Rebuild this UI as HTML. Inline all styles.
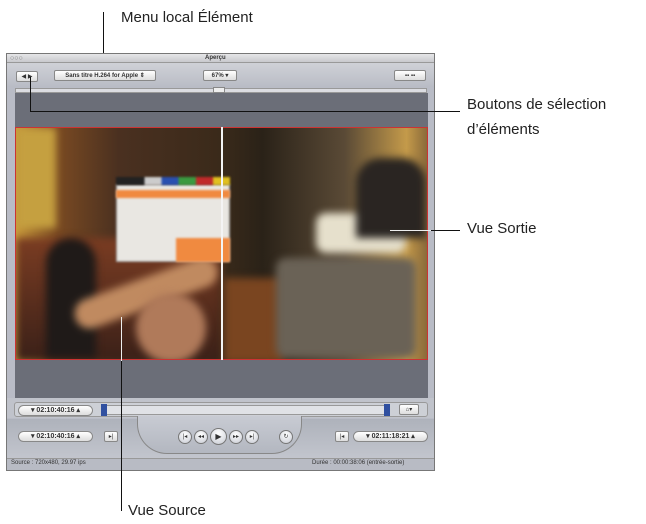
<!DOCTYPE html>
<html><head><meta charset="utf-8"><style>
*{margin:0;padding:0;box-sizing:border-box}
body{width:646px;height:524px;background:#fff;position:relative;overflow:hidden;font-family:"Liberation Sans",sans-serif}
.a{position:absolute}
.lbl{position:absolute;font-size:15px;color:#222;white-space:nowrap}
.ln{position:absolute;background:#111}
.win{left:6px;top:53px;width:429px;height:418px;background:#b9bcc6;border:1px solid #777}
.sm{font-size:6px;color:#333;font-weight:bold}
.pill{position:absolute;height:11px;border:1px solid #888;border-radius:6px;background:linear-gradient(#fff,#ddd);font-size:7px;font-weight:bold;color:#333;text-align:center;line-height:10px}
.btn{position:absolute;height:11px;border:1px solid #888;border-radius:2px;background:linear-gradient(#fff,#ddd);font-size:6px;text-align:center;line-height:10px;color:#333}
.cb{position:absolute;width:14px;height:14px;border:1px solid #777;border-radius:50%;background:radial-gradient(circle at 50% 30%,#fff,#c8cbd3);font-size:6px;text-align:center;line-height:13px;color:#333}
.bl{filter:blur(4px)}
</style></head><body>
<div class="lbl" style="left:121px;top:9px">Menu local Élément</div>
<div class="ln" style="left:103px;top:12px;width:1px;height:49px"></div>
<div class="lbl" style="left:467px;top:96px">Boutons de sélection</div>
<div class="lbl" style="left:467px;top:121px">d’éléments</div>
<div class="lbl" style="left:467px;top:220px">Vue Sortie</div>
<div class="lbl" style="left:128px;top:502px">Vue Source</div>

<div class="a win">
 <div class="a" style="left:0;top:0;width:427px;height:9px;background:linear-gradient(#e6e6e8,#c8c9cd);border-bottom:1px solid #999"></div>
 <div class="a" style="left:3px;top:1px;font-size:7px;color:#777">○○○</div>
 <div class="a sm" style="left:198px;top:1px;font-size:6px">Aperçu</div>
 <div class="a" style="left:0;top:9px;width:427px;height:24px;background:linear-gradient(#cfd1d7,#b9bcc5)"></div>
 <div class="btn" style="left:9px;top:17px;width:22px">◀ ▶</div>
 <div class="btn" style="left:47px;top:16px;width:102px;font-weight:bold">Sans titre H.264 for Apple ⇕</div>
 <div class="btn" style="left:196px;top:16px;width:34px;font-weight:bold">67% ▾</div>
 <div class="btn" style="left:387px;top:16px;width:32px">▪▪ ▪▪</div>
 <div class="a" style="left:8px;top:34px;width:412px;height:5px;background:#dcdde2;border:1px solid #999"></div>
 <div class="a" style="left:206px;top:33px;width:12px;height:6px;background:#eee;border:1px solid #888"></div>
 <div class="a" style="left:8px;top:39px;width:413px;height:305px;background:#6b6e78"></div>
 <div class="a" style="left:8px;top:73px;width:413px;height:233px;border:1px solid #c33;overflow:hidden;
  background:linear-gradient(90deg,#c99a3b 0,#7a4a22 10%,#4a3020 25%,#3a2a1a 50%,#2a2218 60%,#5a4a36 80%,#c49a4a 95%,#8a6a3a 100%)">
  <div class="a bl" style="left:0;top:0;width:40px;height:100px;background:#c5a040"></div>
  <div class="a bl" style="left:0;top:110px;width:205px;height:123px;background:linear-gradient(#7a3c22,#3a2018)"></div>
  <div class="a bl" style="left:30px;top:110px;width:50px;height:120px;border-radius:25px 25px 0 0;background:#1f1a18"></div>
  <div class="a bl" style="left:55px;top:150px;width:150px;height:30px;border-radius:15px;background:#c08a60;transform:rotate(-20deg)"></div>
  <div class="a bl" style="left:120px;top:165px;width:70px;height:70px;border-radius:35px;background:#b07a5a"></div>
  <div class="a bl" style="left:208px;top:150px;width:60px;height:85px;background:#7a4520"></div>
  <div class="a" style="left:100px;top:56px;width:114px;height:78px;background:#e9e7e2;border:1px solid #999;filter:blur(1px)"></div>
  <div class="a" style="left:100px;top:49px;width:114px;height:8px;filter:blur(1px);background:linear-gradient(90deg,#222 25%,#ccc 25% 40%,#2a50b0 40% 55%,#3a9a40 55% 70%,#c02a2a 70% 85%,#e0c020 85%)"></div>
  <div class="a" style="left:100px;top:62px;width:114px;height:8px;background:#f08a40;filter:blur(1px)"></div>
  <div class="a" style="left:160px;top:110px;width:54px;height:24px;background:#f08a40;filter:blur(1px)"></div>
  <div class="a bl" style="left:260px;top:130px;width:140px;height:100px;background:#6a6256;border-radius:10px"></div>
  <div class="a bl" style="left:300px;top:85px;width:90px;height:40px;background:#e6e0cc;border-radius:10px"></div>
  <div class="a bl" style="left:340px;top:30px;width:70px;height:80px;background:#2a2522;border-radius:25px 25px 0 0"></div>
 </div>
 <div class="a" style="left:214px;top:73px;width:2px;height:233px;background:#f4f4f4"></div>
 <div class="a" style="left:0;top:344px;width:427px;height:20px;background:#c0c3cb"></div>
 <div class="a" style="left:7px;top:348px;width:414px;height:15px;border:1px solid #999;border-radius:3px;background:#cdd0d6"></div>
 <div class="pill" style="left:11px;top:351px;width:75px">▾ 02:10:40:16 ▴</div>
 <div class="a" style="left:96px;top:351px;width:282px;height:10px;background:#e0e2e6;border:1px solid #999"></div>
 <div class="a" style="left:94px;top:350px;width:6px;height:12px;background:#3050a0"></div>
 <div class="a" style="left:377px;top:350px;width:6px;height:12px;background:#3050a0"></div>
 <div class="btn" style="left:392px;top:350px;width:20px">⌂▾</div>
 <div class="a" style="left:0;top:365px;width:427px;height:39px;background:linear-gradient(#aeb2bb,#c2c5cd)"></div>
 <div class="a" style="left:130px;top:362px;width:165px;height:38px;border-radius:0 0 30px 30px;background:linear-gradient(#c8cbd3,#b3b7c0);border:1px solid #888;border-top:none"></div>
 <div class="pill" style="left:11px;top:377px;width:75px">▾ 02:10:40:16 ▴</div>
 <div class="btn" style="left:97px;top:377px;width:14px">▸|</div>
 <div class="cb" style="left:171px;top:376px">|◂</div>
 <div class="cb" style="left:187px;top:376px">◂◂</div>
 <div class="cb" style="left:203px;top:374px;width:17px;height:17px;line-height:16px;font-size:8px">▶</div>
 <div class="cb" style="left:222px;top:376px">▸▸</div>
 <div class="cb" style="left:238px;top:376px">▸|</div>
 <div class="cb" style="left:272px;top:376px">↻</div>
 <div class="btn" style="left:328px;top:377px;width:14px">|◂</div>
 <div class="pill" style="left:346px;top:377px;width:75px">▾ 02:11:18:21 ▴</div>
 <div class="a" style="left:0;top:404px;width:427px;height:12px;background:#b8bbc4;border-top:1px solid #999"></div>
 <div class="a" style="left:4px;top:406px;font-size:6px;color:#333">Source : 720x480, 29.97 ips</div>
 <div class="a" style="left:305px;top:406px;font-size:6px;color:#333">Durée : 00:00:38:06 (entrée-sortie)</div>
</div>

<div class="ln" style="left:30px;top:77px;width:1px;height:35px"></div>
<div class="ln" style="left:30px;top:111px;width:430px;height:1px"></div>
<div class="ln" style="left:390px;top:230px;width:70px;height:1px;background:#eee"></div>
<div class="ln" style="left:431px;top:230px;width:29px;height:1px"></div>
<div class="ln" style="left:121px;top:317px;width:1px;height:44px;background:#eee"></div>
<div class="ln" style="left:121px;top:361px;width:1px;height:150px"></div>
</body></html>
